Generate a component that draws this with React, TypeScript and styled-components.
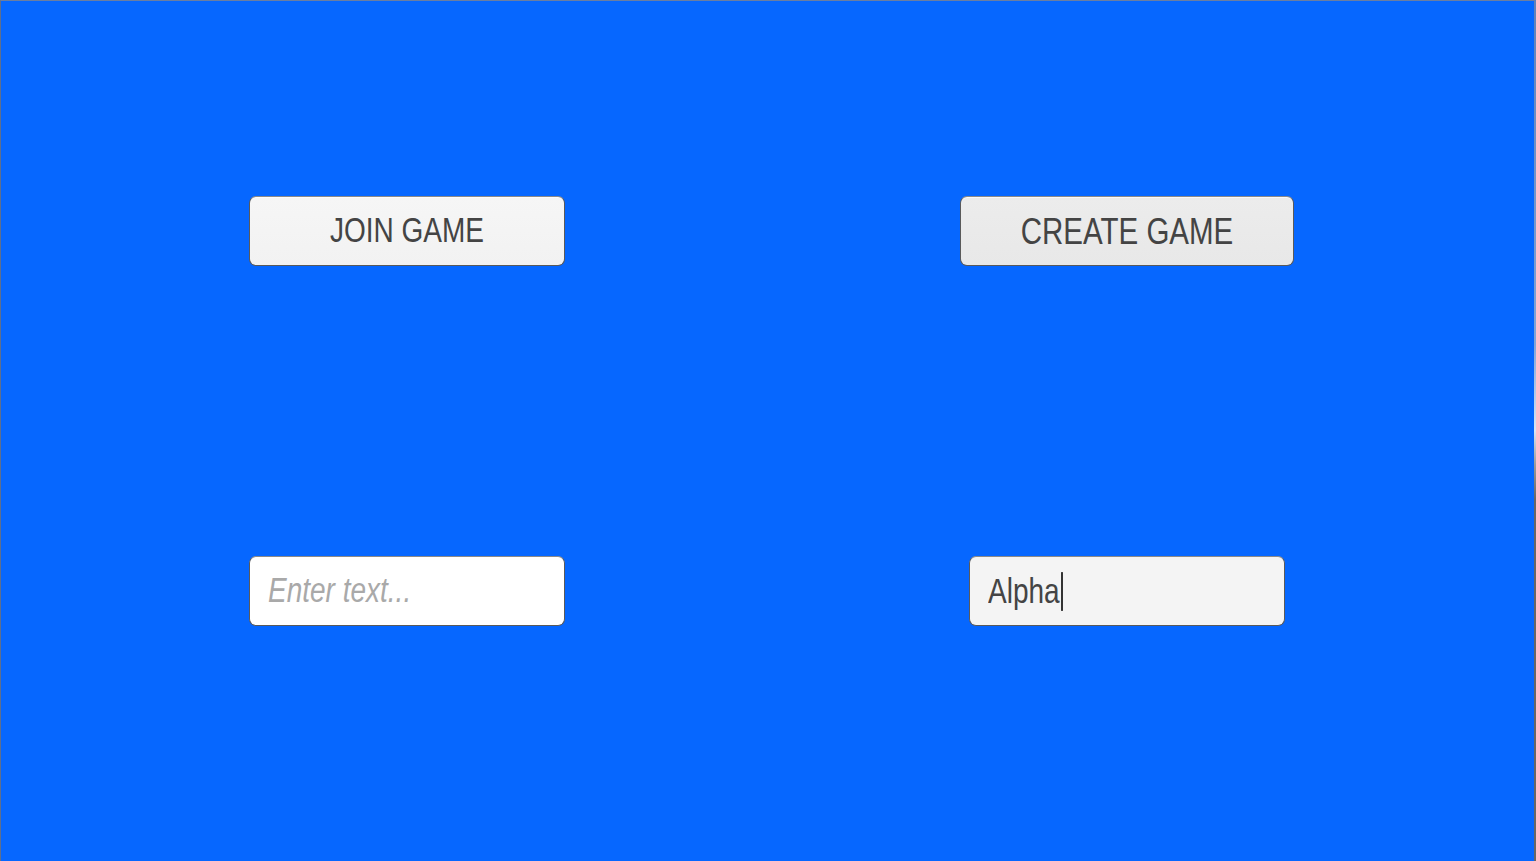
import React from "react";
import styled, { createGlobalStyle } from "styled-components";

const Global = createGlobalStyle`
  html, body { margin: 0; padding: 0; }
  body { width: 1536px; height: 861px; overflow: hidden; background: #0667ff; }
  #root { height: 861px; }
`;

const Screen = styled.div`
  position: relative;
  box-sizing: border-box;
  width: 1536px;
  height: 861px;
  background: #0667ff;
  border-top: 1px solid #6b7ea0;
  border-left: 1px solid #5e6f8e;
  padding: 195px 0 0 248px;
  display: grid;
  grid-template-columns: 316px 334px;
  grid-template-rows: 70px 70px;
  column-gap: 395px;
  row-gap: 290px;
  align-content: start;
  font-family: "Liberation Sans", Arial, sans-serif;
`;

const RightEdge = styled.div`
  position: absolute;
  top: -1px;
  right: 0;
  width: 2px;
  height: 861px;
  background: linear-gradient(
    to bottom,
    #5f80b8 0%,
    #7fa4d8 40%,
    #d8e6f4 50%,
    #9a9a9a 54%,
    #666666 58%,
    #666666 100%
  );
`;

const Cell = styled.div`
  display: flex;
  justify-content: center;
`;

const Button = styled.button<{ $w: number; $bg: string }>`
  box-sizing: border-box;
  width: ${(p) => p.$w}px;
  height: 70px;
  margin: 0;
  padding: 0;
  border: 1px solid #5a5a5a;
  border-top-color: #8a8a8a;
  border-radius: 7px;
  background: ${(p) => p.$bg};
  box-shadow: inset 0 1px 0 rgba(255, 255, 255, 0.7);
  display: flex;
  align-items: center;
  justify-content: center;
  font-family: "Liberation Sans", Arial, sans-serif;
  cursor: pointer;
`;

const Label = styled.span<{ $size: number }>`
  display: inline-block;
  font-size: ${(p) => p.$size}px;
  line-height: 28px;
  color: #444444;
  transform: scaleY(1.25);
`;

const Field = styled.div<{ $bg: string }>`
  box-sizing: border-box;
  width: 316px;
  height: 70px;
  border: 1px solid #5a5a5a;
  border-top-color: #8a8a8a;
  border-radius: 7px;
  background: ${(p) => p.$bg};
  display: flex;
  align-items: center;
  padding-left: 18px;
`;

const Placeholder = styled.span`
  display: inline-block;
  font-size: 28px;
  line-height: 28px;
  font-style: italic;
  color: #a9a9a9;
  transform: scaleY(1.25);
`;

const Value = styled.span`
  display: inline-flex;
  align-items: center;
  font-size: 28px;
  line-height: 28px;
  color: #444444;
  transform: scaleY(1.25);
`;

const Caret = styled.span`
  display: inline-block;
  width: 2px;
  height: 31px;
  margin-left: 1px;
  background: #333;
`;

export default function App() {
  return (
    <>
      <Global />
      <Screen>
        <Cell>
          <Button $w={316} $bg="linear-gradient(#f6f6f6, #f2f2f2)">
            <Label $size={28}>JOIN GAME</Label>
          </Button>
        </Cell>
        <Cell>
          <Button $w={334} $bg="linear-gradient(#ececec, #e8e8e8)">
            <Label $size={29.5}>CREATE GAME</Label>
          </Button>
        </Cell>
        <Cell>
          <Field $bg="#ffffff">
            <Placeholder>Enter text...</Placeholder>
          </Field>
        </Cell>
        <Cell>
          <Field $bg="#f4f4f4">
            <Value>
              Alpha
              <Caret />
            </Value>
          </Field>
        </Cell>
        <RightEdge />
      </Screen>
    </>
  );
}
